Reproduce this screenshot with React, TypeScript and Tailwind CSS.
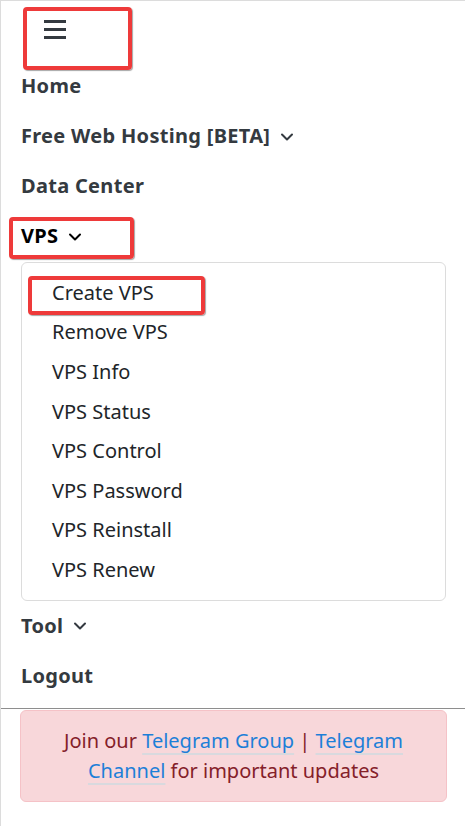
import React from 'react';

const navFont = { fontFamily: '"Noto Sans", "Open Sans", Arial, sans-serif' };

const Chevron: React.FC = () => (
  <svg width="14" height="10" viewBox="0 0 14 10" className="ml-[10px] mt-[1px]" fill="none" stroke="currentColor" strokeWidth="2" strokeLinecap="round" strokeLinejoin="round">
    <path d="M2 2.5l5 5 5-5" />
  </svg>
);

const Annot: React.FC<{ className: string }> = ({ className }) => (
  <div className={`pointer-events-none absolute rounded-[4px] border-4 border-[#ee3a3a] shadow-[1px_1px_1px_rgba(0,0,0,0.35)] ${className}`} />
);

const vpsItems = ['Create VPS', 'Remove VPS', 'VPS Info', 'VPS Status', 'VPS Control', 'VPS Password', 'VPS Reinstall', 'VPS Renew'];

const App: React.FC = () => {
  return (
    <div className="relative min-h-[826px] w-[465px] border-t border-l border-[#dcdcdc] bg-white" style={navFont}>
      <Annot className="left-[22px] top-[6px] h-[63px] w-[109px]" />
      <Annot className="left-[8px] top-[216px] h-[42px] w-[125px]" />
      <Annot className="left-[27px] top-[275px] h-[39px] w-[177px]" />

      {/* toggler */}
      <div className="h-[60px] pl-[43px] pt-[19px]">
        <div className="flex w-[22px] flex-col gap-[5px]">
          <span className="block h-[3px] bg-[#343a40]" />
          <span className="block h-[3px] bg-[#343a40]" />
          <span className="block h-[3px] bg-[#343a40]" />
        </div>
      </div>

      <ul className="pl-[20px] pr-[19px] text-[20px] font-bold tracking-[0.3px] text-[#343a40]">
        <li className="py-[10px] leading-[30px]">Home</li>
        <li className="flex items-center py-[10px] leading-[30px]">
          Free Web Hosting [BETA]
          <Chevron />
        </li>
        <li className="py-[10px] leading-[30px]">Data Center</li>
        <li className="flex items-center py-[10px] leading-[30px] text-black">
          VPS
          <Chevron />
        </li>
        <li>
          <div className="mt-[1px] rounded-[6px] border border-[#dcdcdc] py-[10px] font-normal tracking-normal text-[#212529]">
            {vpsItems.map((item) => (
              <div key={item} className="flex h-[39.6px] items-center px-[30px] leading-[30px]">
                {item}
              </div>
            ))}
          </div>
        </li>
        <li className="flex items-center py-[10px] leading-[30px]">
          Tool
          <Chevron />
        </li>
        <li className="py-[10px] leading-[30px]">Logout</li>
      </ul>

      <hr className="mt-[7px] border-0 border-t border-[#8e8e8e]" />

      <div className="ml-[19px] mt-[1px] w-[427px] rounded-[6px] border border-[#f5c2c7] bg-[#f8d7da] px-[20px] py-[15px] text-center text-[20px] leading-[30px] text-[#842029]">
        Join our{' '}
        <a className="text-[#1d7fd8] underline decoration-[#d9d9de] decoration-2 underline-offset-[5px]">Telegram Group</a>
        {' | '}
        <a className="text-[#1d7fd8] underline decoration-[#d9d9de] decoration-2 underline-offset-[5px]">Telegram Channel</a>
        {' '}for important updates
      </div>
    </div>
  );
};

export default App;
